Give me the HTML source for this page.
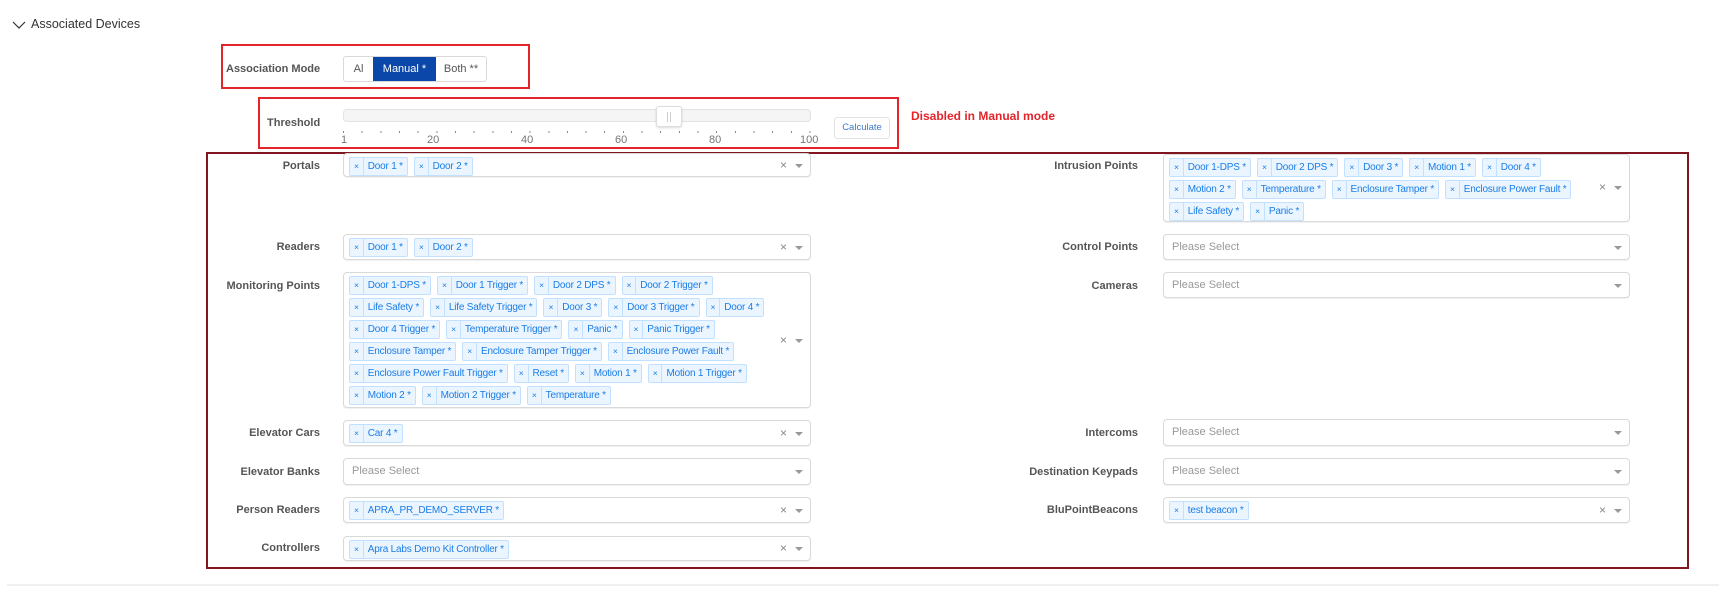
<!DOCTYPE html>
<html><head><meta charset="utf-8"><style>
*{box-sizing:border-box;margin:0;padding:0}
body{width:1728px;height:592px;background:#fff;font-family:"Liberation Sans",Arial,sans-serif;position:relative;overflow:hidden;color:#333}
.a{position:absolute}
.lbl{position:absolute;font-size:11px;font-weight:bold;color:#555;text-align:right;width:200px;line-height:14px}
.sel{position:absolute;border:1px solid #d9d9d9;border-radius:4px;background:#fff;box-shadow:0 1px 1px rgba(0,0,0,.06)}
.l{left:343px;width:468px}
.r{left:1163px;width:467px}
.tags{padding:2px 50px 0 4px}
.row{height:22px;white-space:nowrap}
.t{display:inline-block;height:19px;margin:1px 0 0 1px;margin-right:5px;border:1px solid #c2e0ff;background:#ebf5ff;border-radius:2px;color:#1a7de6;font-size:10px;line-height:17px;vertical-align:top;letter-spacing:-0.2px}
.t i{font-style:normal;display:inline-block;padding:0 4px;border-right:1px solid #c2e0ff;font-size:8.5px}
.t b{font-weight:normal;padding:0 4px}
.ph{position:absolute;left:8px;top:6px;font-size:11px;color:#999}
.x{position:absolute;right:23px;font-size:12px;color:#888}
.arr{position:absolute;right:7px;width:0;height:0;border-left:4px solid transparent;border-right:4px solid transparent;border-top:4px solid #999}
</style></head><body>
<svg class="a" style="left:12px;top:20px" width="14" height="10"><path d="M1 2 L7 8 L13 2" stroke="#333" stroke-width="1.2" fill="none"/></svg>
<div class="a" style="left:31px;top:17px;font-size:12.5px;color:#333">Associated Devices</div>

<div class="a" style="left:221px;top:44px;width:309px;height:45px;border:2px solid #e3242b"></div>
<div class="a" style="left:226px;top:63px;font-size:11px;font-weight:bold;color:#555">Association Mode</div>
<div class="a" style="left:343px;top:56px;height:26px;width:144px;border:1px solid #d9d9d9;border-radius:3px;font-size:11px;line-height:24px;display:flex">
<span style="width:29px;text-align:center;color:#555">Al</span>
<span style="width:63px;text-align:center;color:#fff;background:#0b47a8">Manual *</span>
<span style="flex:1;text-align:center;color:#555">Both **</span></div>

<div class="a" style="left:258px;top:97px;width:641px;height:52px;border:2px solid #e3242b"></div>
<div class="a" style="left:267px;top:117px;font-size:11px;font-weight:bold;color:#555">Threshold</div>
<div class="a" style="left:343px;top:109px;width:468px;height:13px;background:#f5f5f5;border:1px solid #e3e3e3;border-radius:4px"></div>
<div class="a" style="left:656px;top:106px;width:26px;height:21px;background:#fff;border:1px solid #ddd;border-radius:3px;box-shadow:0 1px 2px rgba(0,0,0,.15)"><div style="position:absolute;left:10px;top:5px;width:4px;height:10px;border-left:1px solid #ccc;border-right:1px solid #ccc"></div></div>
<div class="a" style="left:343px;top:131px;width:470px;height:2px;background:repeating-linear-gradient(90deg,#888 0 1px,transparent 1px 18.66px)"></div>
<div class="a" style="top:134px;font-size:11px;color:#777;left:341px">1</div>
<div class="a" style="top:134px;font-size:11px;color:#777;left:427px">20</div>
<div class="a" style="top:134px;font-size:11px;color:#777;left:521px">40</div>
<div class="a" style="top:134px;font-size:11px;color:#777;left:615px">60</div>
<div class="a" style="top:134px;font-size:11px;color:#777;left:709px">80</div>
<div class="a" style="top:134px;font-size:11px;color:#777;left:800px">100</div>
<div class="a" style="left:834px;top:117px;width:56px;height:22px;border:1px solid #e3e3e3;border-radius:3px;font-size:9.5px;color:#3a78c9;text-align:center;line-height:20px">Calculate</div>
<div class="a" style="left:911px;top:109px;font-size:12px;font-weight:bold;color:#e3242b">Disabled in Manual mode</div>

<div class="a" style="left:206px;top:152px;width:1483px;height:417px;border:2px solid #7f1620"></div>
<div class="a" style="left:7px;top:584px;width:1712px;height:2px;background:#f0f0f0"></div>

<!-- left column -->
<div class="lbl" style="left:120px;top:159px">Portals</div>
<div class="sel l tags" style="top:153px;height:24px"><div class="row"><span class="t"><i>×</i><b>Door 1 *</b></span><span class="t"><i>×</i><b>Door 2 *</b></span></div><span class="x" style="top:4px">×</span><span class="arr" style="top:10px"></span></div>

<div class="lbl" style="left:120px;top:240px">Readers</div>
<div class="sel l tags" style="top:234px;height:26px"><div class="row"><span class="t"><i>×</i><b>Door 1 *</b></span><span class="t"><i>×</i><b>Door 2 *</b></span></div><span class="x" style="top:5px">×</span><span class="arr" style="top:11px"></span></div>

<div class="lbl" style="left:120px;top:279px">Monitoring Points</div>
<div class="sel l tags" style="top:272px;height:136px">
<div class="row"><span class="t"><i>×</i><b>Door 1-DPS *</b></span><span class="t"><i>×</i><b>Door 1 Trigger *</b></span><span class="t"><i>×</i><b>Door 2 DPS *</b></span><span class="t"><i>×</i><b>Door 2 Trigger *</b></span></div>
<div class="row"><span class="t"><i>×</i><b>Life Safety *</b></span><span class="t"><i>×</i><b>Life Safety Trigger *</b></span><span class="t"><i>×</i><b>Door 3 *</b></span><span class="t"><i>×</i><b>Door 3 Trigger *</b></span><span class="t"><i>×</i><b>Door 4 *</b></span></div>
<div class="row"><span class="t"><i>×</i><b>Door 4 Trigger *</b></span><span class="t"><i>×</i><b>Temperature Trigger *</b></span><span class="t"><i>×</i><b>Panic *</b></span><span class="t"><i>×</i><b>Panic Trigger *</b></span></div>
<div class="row"><span class="t"><i>×</i><b>Enclosure Tamper *</b></span><span class="t"><i>×</i><b>Enclosure Tamper Trigger *</b></span><span class="t"><i>×</i><b>Enclosure Power Fault *</b></span></div>
<div class="row"><span class="t"><i>×</i><b>Enclosure Power Fault Trigger *</b></span><span class="t"><i>×</i><b>Reset *</b></span><span class="t"><i>×</i><b>Motion 1 *</b></span><span class="t"><i>×</i><b>Motion 1 Trigger *</b></span></div>
<div class="row"><span class="t"><i>×</i><b>Motion 2 *</b></span><span class="t"><i>×</i><b>Motion 2 Trigger *</b></span><span class="t"><i>×</i><b>Temperature *</b></span></div>
<span class="x" style="top:60px">×</span><span class="arr" style="top:66px"></span></div>

<div class="lbl" style="left:120px;top:426px">Elevator Cars</div>
<div class="sel l tags" style="top:420px;height:26px"><div class="row"><span class="t"><i>×</i><b>Car 4 *</b></span></div><span class="x" style="top:5px">×</span><span class="arr" style="top:11px"></span></div>

<div class="lbl" style="left:120px;top:465px">Elevator Banks</div>
<div class="sel l" style="top:458px;height:27px"><span class="ph">Please Select</span><span class="arr" style="top:11px"></span></div>

<div class="lbl" style="left:120px;top:503px">Person Readers</div>
<div class="sel l tags" style="top:497px;height:26px"><div class="row"><span class="t"><i>×</i><b>APRA_PR_DEMO_SERVER *</b></span></div><span class="x" style="top:5px">×</span><span class="arr" style="top:11px"></span></div>

<div class="lbl" style="left:120px;top:541px">Controllers</div>
<div class="sel l tags" style="top:536px;height:25px"><div class="row"><span class="t"><i>×</i><b>Apra Labs Demo Kit Controller *</b></span></div><span class="x" style="top:4px">×</span><span class="arr" style="top:10px"></span></div>

<!-- right column -->
<div class="lbl" style="left:938px;top:159px">Intrusion Points</div>
<div class="sel r tags" style="top:154px;height:68px">
<div class="row"><span class="t"><i>×</i><b>Door 1-DPS *</b></span><span class="t"><i>×</i><b>Door 2 DPS *</b></span><span class="t"><i>×</i><b>Door 3 *</b></span><span class="t"><i>×</i><b>Motion 1 *</b></span><span class="t"><i>×</i><b>Door 4 *</b></span></div>
<div class="row"><span class="t"><i>×</i><b>Motion 2 *</b></span><span class="t"><i>×</i><b>Temperature *</b></span><span class="t"><i>×</i><b>Enclosure Tamper *</b></span><span class="t"><i>×</i><b>Enclosure Power Fault *</b></span></div>
<div class="row"><span class="t"><i>×</i><b>Life Safety *</b></span><span class="t"><i>×</i><b>Panic *</b></span></div>
<span class="x" style="top:25px">×</span><span class="arr" style="top:31px"></span></div>

<div class="lbl" style="left:938px;top:240px">Control Points</div>
<div class="sel r" style="top:234px;height:26px"><span class="ph">Please Select</span><span class="arr" style="top:11px"></span></div>

<div class="lbl" style="left:938px;top:279px">Cameras</div>
<div class="sel r" style="top:272px;height:26px"><span class="ph">Please Select</span><span class="arr" style="top:11px"></span></div>

<div class="lbl" style="left:938px;top:426px">Intercoms</div>
<div class="sel r" style="top:419px;height:27px"><span class="ph">Please Select</span><span class="arr" style="top:11px"></span></div>

<div class="lbl" style="left:938px;top:465px">Destination Keypads</div>
<div class="sel r" style="top:458px;height:27px"><span class="ph">Please Select</span><span class="arr" style="top:11px"></span></div>

<div class="lbl" style="left:938px;top:503px">BluPointBeacons</div>
<div class="sel r tags" style="top:497px;height:26px"><div class="row"><span class="t"><i>×</i><b>test beacon *</b></span></div><span class="x" style="top:5px">×</span><span class="arr" style="top:11px"></span></div>
</body></html>
